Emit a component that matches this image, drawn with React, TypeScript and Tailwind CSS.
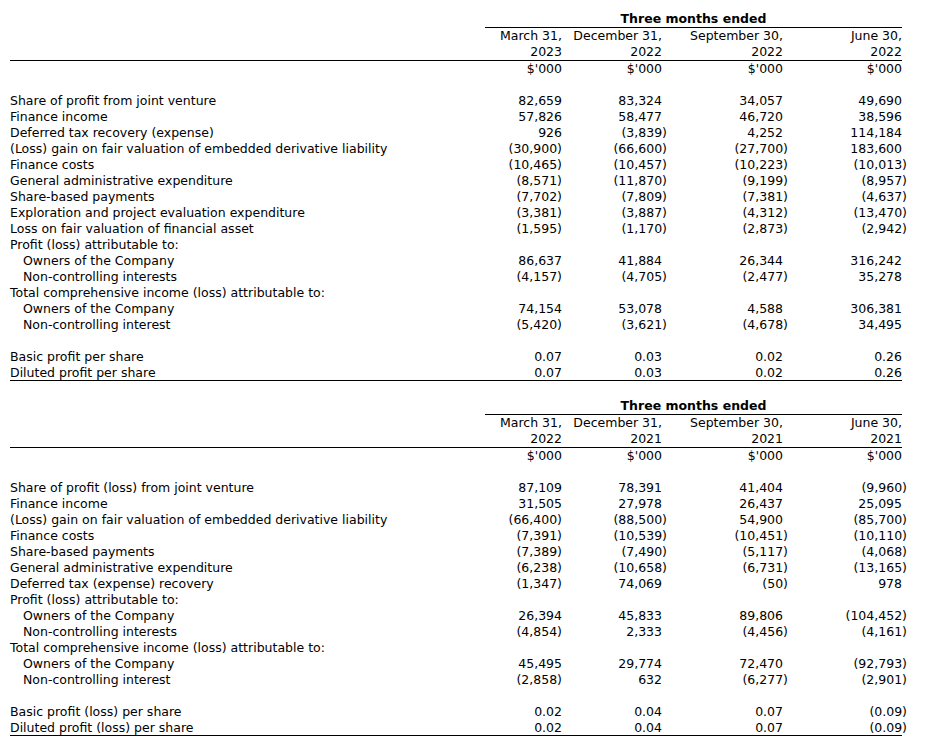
import React from 'react';

type Row = {
  label?: string;
  indent?: boolean;
  values?: string[];
};

interface Period {
  month: string;
  year: string;
}

const firstPeriods: Period[] = [
  { month: 'March 31,', year: '2023' },
  { month: 'December 31,', year: '2022' },
  { month: 'September 30,', year: '2022' },
  { month: 'June 30,', year: '2022' },
];

const secondPeriods: Period[] = [
  { month: 'March 31,', year: '2022' },
  { month: 'December 31,', year: '2021' },
  { month: 'September 30,', year: '2021' },
  { month: 'June 30,', year: '2021' },
];

const firstRows: Row[] = [
  { label: 'Share of profit from joint venture', values: ['82,659', '83,324', '34,057', '49,690'] },
  { label: 'Finance income', values: ['57,826', '58,477', '46,720', '38,596'] },
  { label: 'Deferred tax recovery (expense)', values: ['926', '(3,839)', '4,252', '114,184'] },
  { label: '(Loss) gain on fair valuation of embedded derivative liability', values: ['(30,900)', '(66,600)', '(27,700)', '183,600'] },
  { label: 'Finance costs', values: ['(10,465)', '(10,457)', '(10,223)', '(10,013)'] },
  { label: 'General administrative expenditure', values: ['(8,571)', '(11,870)', '(9,199)', '(8,957)'] },
  { label: 'Share-based payments', values: ['(7,702)', '(7,809)', '(7,381)', '(4,637)'] },
  { label: 'Exploration and project evaluation expenditure', values: ['(3,381)', '(3,887)', '(4,312)', '(13,470)'] },
  { label: 'Loss on fair valuation of financial asset', values: ['(1,595)', '(1,170)', '(2,873)', '(2,942)'] },
  { label: 'Profit (loss) attributable to:' },
  { label: 'Owners of the Company', indent: true, values: ['86,637', '41,884', '26,344', '316,242'] },
  { label: 'Non-controlling interests', indent: true, values: ['(4,157)', '(4,705)', '(2,477)', '35,278'] },
  { label: 'Total comprehensive income (loss) attributable to:' },
  { label: 'Owners of the Company', indent: true, values: ['74,154', '53,078', '4,588', '306,381'] },
  { label: 'Non-controlling interest', indent: true, values: ['(5,420)', '(3,621)', '(4,678)', '34,495'] },
  {},
  { label: 'Basic profit per share', values: ['0.07', '0.03', '0.02', '0.26'] },
  { label: 'Diluted profit per share', values: ['0.07', '0.03', '0.02', '0.26'] },
];

const secondRows: Row[] = [
  { label: 'Share of profit (loss) from joint venture', values: ['87,109', '78,391', '41,404', '(9,960)'] },
  { label: 'Finance income', values: ['31,505', '27,978', '26,437', '25,095'] },
  { label: '(Loss) gain on fair valuation of embedded derivative liability', values: ['(66,400)', '(88,500)', '54,900', '(85,700)'] },
  { label: 'Finance costs', values: ['(7,391)', '(10,539)', '(10,451)', '(10,110)'] },
  { label: 'Share-based payments', values: ['(7,389)', '(7,490)', '(5,117)', '(4,068)'] },
  { label: 'General administrative expenditure', values: ['(6,238)', '(10,658)', '(6,731)', '(13,165)'] },
  { label: 'Deferred tax (expense) recovery', values: ['(1,347)', '74,069', '(50)', '978'] },
  { label: 'Profit (loss) attributable to:' },
  { label: 'Owners of the Company', indent: true, values: ['26,394', '45,833', '89,806', '(104,452)'] },
  { label: 'Non-controlling interests', indent: true, values: ['(4,854)', '2,333', '(4,456)', '(4,161)'] },
  { label: 'Total comprehensive income (loss) attributable to:' },
  { label: 'Owners of the Company', indent: true, values: ['45,495', '29,774', '72,470', '(92,793)'] },
  { label: 'Non-controlling interest', indent: true, values: ['(2,858)', '632', '(6,277)', '(2,901)'] },
  {},
  { label: 'Basic profit (loss) per share', values: ['0.02', '0.04', '0.07', '(0.09)'] },
  { label: 'Diluted profit (loss) per share', values: ['0.02', '0.04', '0.07', '(0.09)'] },
];

// first column keeps its closing bracket inside, the others hang it past the edge
function Amount({ value, hang }: { value: string; hang: boolean }) {
  if (hang && value.endsWith(')')) {
    return (
      <>
        {value.slice(0, -1)}
        <span className="-mr-[5px]">)</span>
      </>
    );
  }
  return <>{value}</>;
}

function Statement({ periods, rows }: { periods: Period[]; rows: Row[] }) {
  const last = rows.length - 1;
  return (
    <div className="grid grid-cols-[475px_77px_100px_121px_119px] leading-4">
      {/* Header */}
      <div className="h-4" />
      <div className="col-span-4 border-b border-black text-center font-bold">Three months ended</div>

      <div className="h-4" />
      {periods.map((p, i) => (
        <div key={`m${i}`} className="text-right whitespace-nowrap">{p.month}</div>
      ))}

      <div className="h-[17px] border-b border-black" />
      {periods.map((p, i) => (
        <div key={`y${i}`} className="h-[17px] border-b border-black text-right">{p.year}</div>
      ))}

      <div className="h-4" />
      {periods.map((_, i) => (
        <div key={`u${i}`} className="text-right">$'000</div>
      ))}

      <div className="col-span-5 h-4" />

      {rows.map((row, r) => {
        const border = r === last ? 'border-b border-black' : '';
        return (
          <React.Fragment key={r}>
            <div className={`h-4 whitespace-nowrap ${row.indent ? 'pl-[13px]' : ''} ${border}`}>{row.label}</div>
            {[0, 1, 2, 3].map((c) => (
              <div key={c} className={`h-4 text-right whitespace-nowrap ${border}`}>
                {row.values && <Amount value={row.values[c]} hang={c > 0} />}
              </div>
            ))}
          </React.Fragment>
        );
      })}
    </div>
  );
}

export default function App() {
  return (
    <div
      className="min-h-screen bg-white pl-[10px] pt-[11px] text-[12.5px] text-black"
      style={{ fontFamily: '"DejaVu Sans", Verdana, sans-serif' }}
    >
      <Statement periods={firstPeriods} rows={firstRows} />
      <div className="mt-[17px]">
        <Statement periods={secondPeriods} rows={secondRows} />
      </div>
    </div>
  );
}
